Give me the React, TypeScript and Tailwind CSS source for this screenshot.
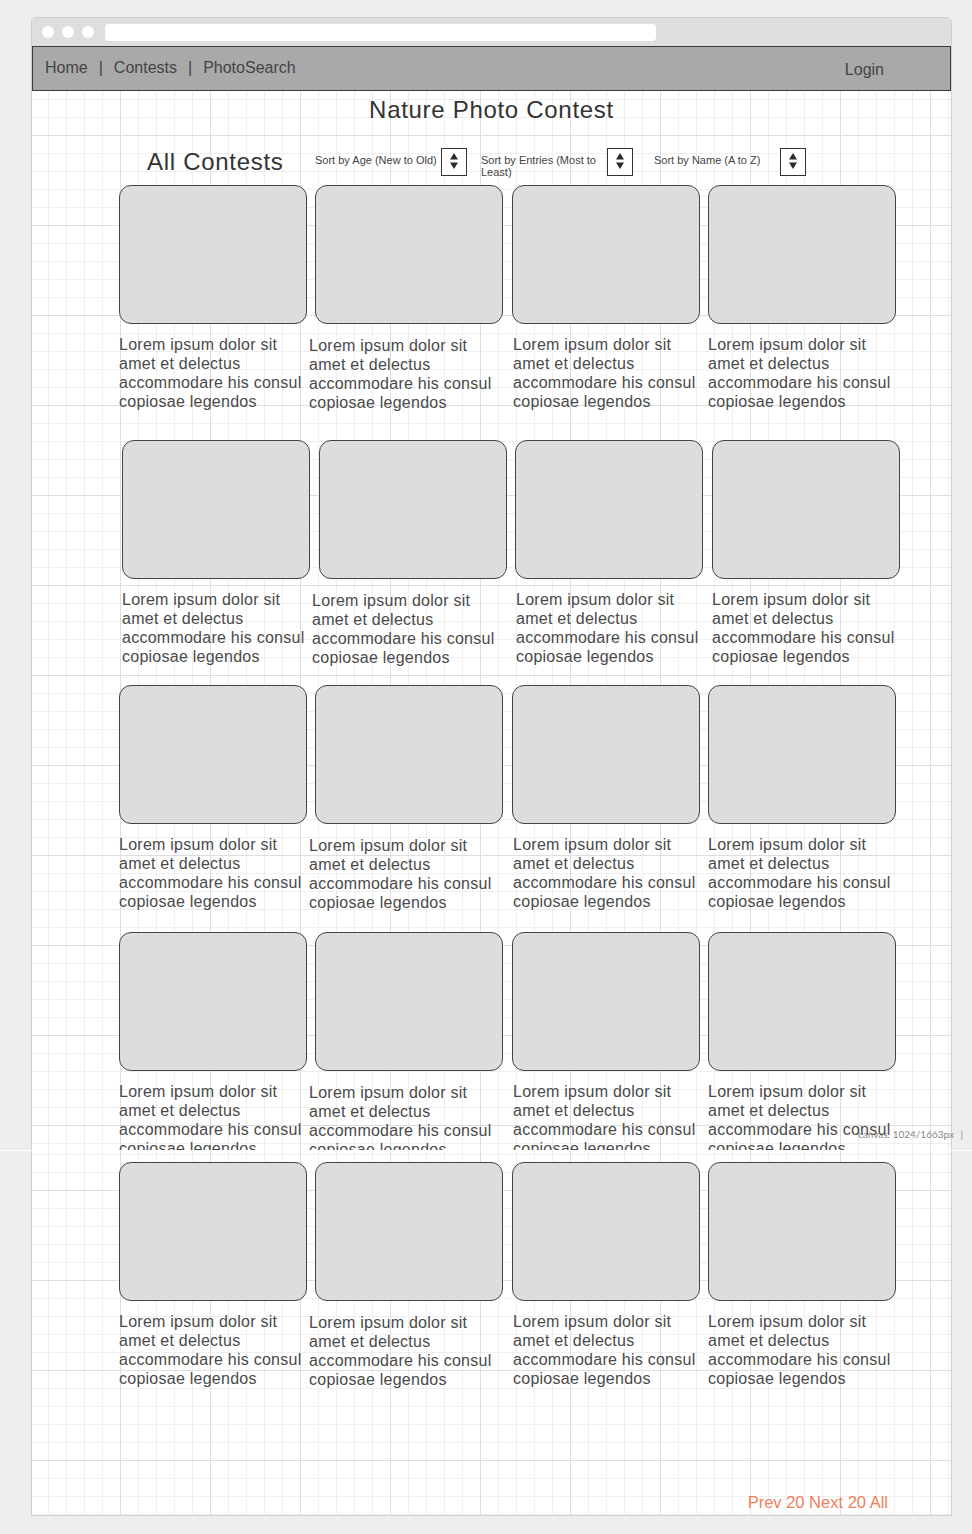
const GRID_TOP =
  '[background-image:linear-gradient(to_right,#dedede_1px,transparent_1px),linear-gradient(to_bottom,#dedede_1px,transparent_1px),linear-gradient(to_right,#efefef_1px,transparent_1px),linear-gradient(to_bottom,#efefef_1px,transparent_1px)] [background-size:90px_90px,90px_90px,18px_18px,18px_18px] [background-position:88px_44px,88px_44px,16px_8px,16px_8px]';
const GRID_BOTTOM =
  '[background-image:linear-gradient(to_right,#dedede_1px,transparent_1px),linear-gradient(to_bottom,#dedede_1px,transparent_1px),linear-gradient(to_right,#efefef_1px,transparent_1px),linear-gradient(to_bottom,#efefef_1px,transparent_1px)] [background-size:90px_90px,90px_90px,18px_18px,18px_18px] [background-position:88px_39px,88px_39px,16px_3px,16px_3px]';

const LINES = ['Lorem ipsum dolor sit', 'amet et delectus', 'accommodare his consul', 'copiosae legendos'];

type Row = { pad: string; gaps: string[]; text: string[]; top: string };

// text offsets follow the mockup: the 2nd caption sits a bit left and lower
const TEXT_A = ['mt-[11px]', 'mt-[12px] -ml-[6px]', 'mt-[11px] ml-px', 'mt-[11px]'];
const TEXT_B = ['mt-[11px]', 'mt-[12px] -ml-[7px]', 'mt-[11px] ml-px', 'mt-[11px]'];

const ROWS_TOP: Row[] = [
  { top: 'mt-[9px]', pad: 'pl-[87px]', gaps: ['', 'ml-[8px]', 'ml-[9px]', 'ml-[8px]'], text: TEXT_A },
  { top: 'mt-[28px]', pad: 'pl-[90px]', gaps: ['', 'ml-[9px]', 'ml-[8px]', 'ml-[9px]'], text: TEXT_B },
  { top: 'mt-[18px]', pad: 'pl-[87px]', gaps: ['', 'ml-[8px]', 'ml-[9px]', 'ml-[8px]'], text: TEXT_A },
  { top: 'mt-[20px]', pad: 'pl-[87px]', gaps: ['', 'ml-[8px]', 'ml-[9px]', 'ml-[8px]'], text: TEXT_A },
];

const ROW_BOTTOM: Row = {
  top: 'mt-[11px]',
  pad: 'pl-[87px]',
  gaps: ['', 'ml-[8px]', 'ml-[9px]', 'ml-[8px]'],
  text: TEXT_A,
};

function Spinner() {
  return (
    <div className="w-[26px] h-[28px] shrink-0 border border-[#333] bg-white">
      <svg width="24" height="26" viewBox="0 0 24 26">
        <polygon points="12,4 16,10.5 8,10.5" fill="#2b2b2b" />
        <polygon points="8,13.5 16,13.5 12,20" fill="#2b2b2b" />
      </svg>
    </div>
  );
}

function Card({ gap, text }: { gap: string; text: string }) {
  return (
    <div className={`w-[188px] shrink-0 ${gap}`}>
      <div className="h-[139px] rounded-[12px] border border-[#444] bg-[#dddddd]" />
      <div className={`text-[16px] leading-[19px] tracking-[0.25px] text-[#4a4a4a] ${text}`}>
        {LINES.map((l) => (
          <div key={l} className="whitespace-nowrap">
            {l}
          </div>
        ))}
      </div>
    </div>
  );
}

function CardRow({ row }: { row: Row }) {
  return (
    <div className={`flex ${row.pad} ${row.top}`}>
      {row.gaps.map((g, i) => (
        <Card key={i} gap={g} text={row.text[i]} />
      ))}
    </div>
  );
}

export default function App() {
  return (
    <div className="relative min-h-[1534px] bg-[#eeeeee] pt-[17px] pl-[31px] font-['Liberation_Sans',Arial,sans-serif]">
      {/* browser frame */}
      <div className="w-[921px] rounded-t-[5px] border border-[#cfcfcf] bg-white">
        <div className="h-[28px] rounded-t-[4px] bg-[#dedede] flex items-center pl-[10px]">
          <div className="flex gap-[8px]">
            <span className="w-[12px] h-[12px] rounded-full bg-white" />
            <span className="w-[12px] h-[12px] rounded-full bg-white" />
            <span className="w-[12px] h-[12px] rounded-full bg-white" />
          </div>
          <div className="ml-[11px] h-[17px] w-[551px] rounded-[4px] bg-white" />
        </div>

        <nav className="h-[45px] border border-[#3a3a3a] bg-[#a9a9a9] flex items-center justify-between text-[16px] text-[#444] pl-[12px] pr-[66px]">
          <div className="flex items-center -mt-[2px]">
            <span>Home</span>
            <span className="mx-[11px]">|</span>
            <span>Contests</span>
            <span className="mx-[11px]">|</span>
            <span>PhotoSearch</span>
          </div>
          <span className="mt-[2px]">Login</span>
        </nav>

        {/* upper part of the page */}
        <div className={`h-[1059px] overflow-hidden ${GRID_TOP}`}>
          <h1 className="mt-[5px] text-center text-[24px] leading-[28px] tracking-[0.7px] text-[#333]">
            Nature Photo Contest
          </h1>

          <div className="mt-[24px] flex items-start h-[28px] pl-[115px] text-[11px] leading-[12px] text-[#444]">
            <div className="w-[168px] text-[24px] leading-[28px] tracking-[0.7px] text-[#333]">All Contests</div>
            <div className="w-[126px] mt-[6px]">Sort by Age (New to Old)</div>
            <Spinner />
            <div className="ml-[14px] w-[120px] mt-[6px]">Sort by Entries (Most to Least)</div>
            <div className="ml-[6px]">
              <Spinner />
            </div>
            <div className="ml-[21px] w-[126px] mt-[6px]">Sort by Name (A to Z)</div>
            <Spinner />
          </div>

          {ROWS_TOP.map((r, i) => (
            <CardRow key={i} row={r} />
          ))}
        </div>

        <div className="h-px bg-white" />

        {/* lower part of the page */}
        <div className={`h-[364px] flex flex-col ${GRID_BOTTOM}`}>
          <CardRow row={ROW_BOTTOM} />
          <div className="mt-auto mb-[3px] flex justify-end pr-[63px] text-[16.5px] leading-[20px] text-[#ef7f5b]">
            Prev 20 Next 20 All
          </div>
        </div>
      </div>

      {/* screenshot seam and canvas size readout */}
      <div className="absolute left-0 right-0 top-[1150px] h-px bg-white/90" />
      <div className="absolute left-[858px] top-[1128px] text-[10px] leading-[12px] text-[#888] font-['Lato',sans-serif]">
        canvas: 1024/1663px <span className="ml-[4px]">|</span>
      </div>
    </div>
  );
}
